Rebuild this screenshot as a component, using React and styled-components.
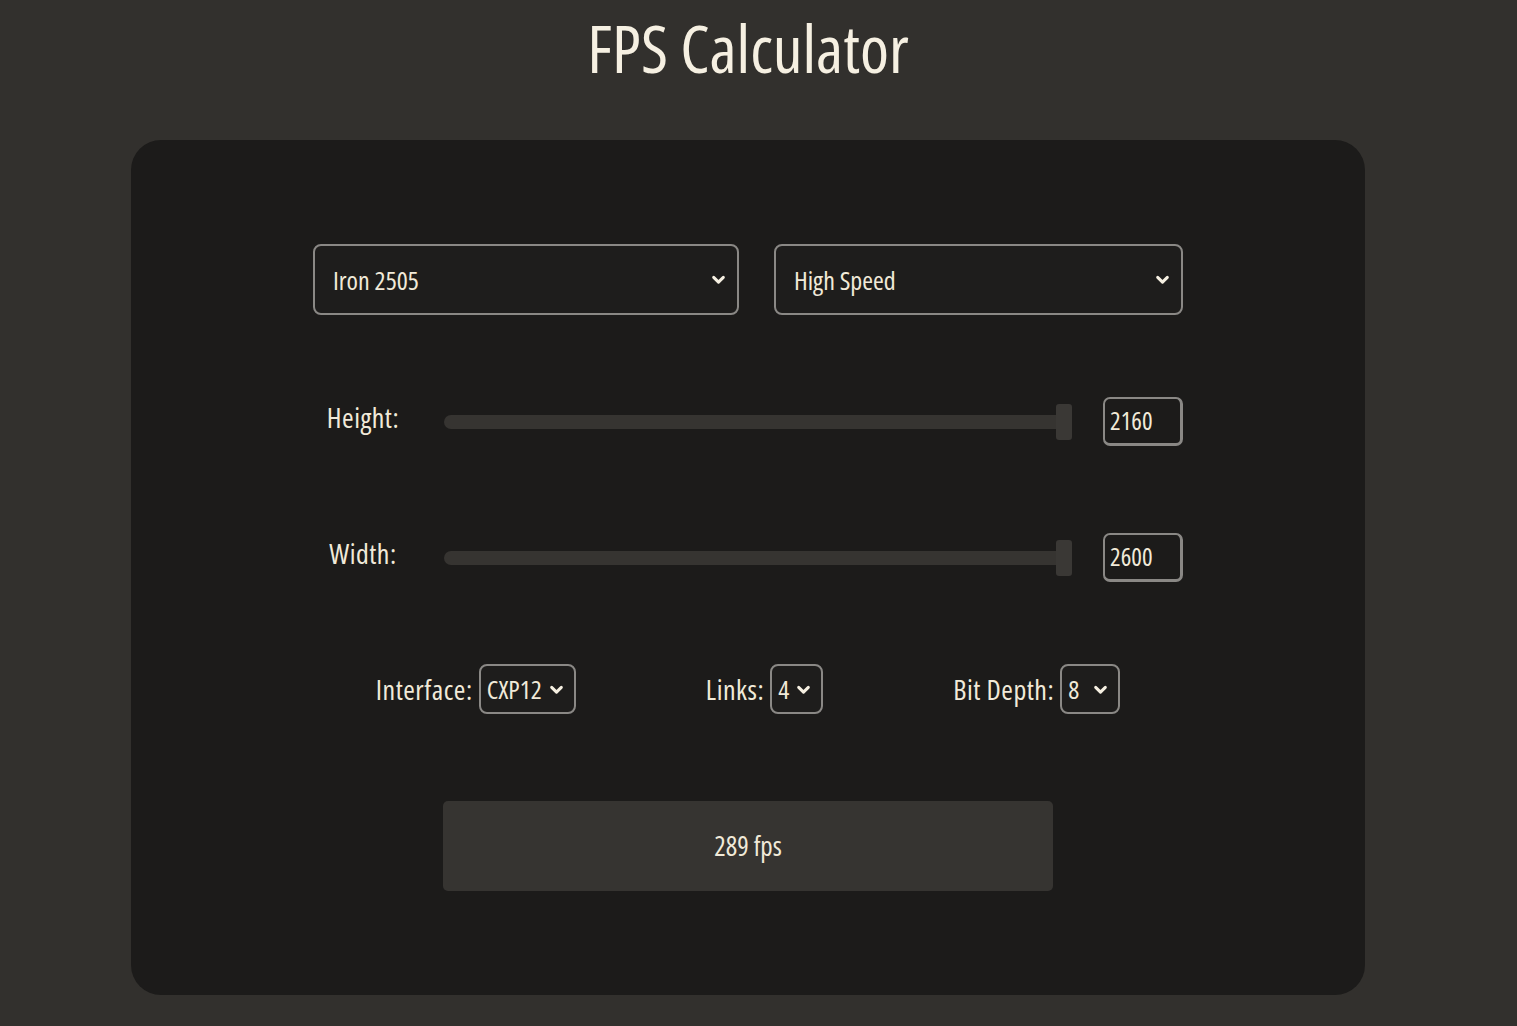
import React from 'react';
import styled, { createGlobalStyle } from 'styled-components';

const GlobalStyle = createGlobalStyle`
    body {
        margin: 0;
        background: #32302d;
        font-family: "Open Sans", "Roboto", sans-serif;
        font-stretch: 75%;
        font-weight: 500;
        color: #f1ead9;
    }
`;

const Page = styled.main`
    min-height: 1026px;
    padding: 9px 152px 0 131px;
    box-sizing: border-box;
`;

const Title = styled.h1`
    margin: 0 0 45px;
    height: 86px;
    font-size: 66px;
    font-weight: 500;
    line-height: 76px;
    text-align: center;
    color: #f6f0e2;
`;

const Card = styled.section`
    background: #1c1b1a;
    border-radius: 30px;
    padding: 104px 0;
    display: flex;
    flex-direction: column;
    align-items: center;
`;

const SelectRow = styled.div`
    width: 870px;
    display: grid;
    grid-template-columns: 426px 409px;
    gap: 35px;
`;

const SelectBox = styled.div`
    width: ${p => p.$w ? `${p.$w}px` : 'auto'};
    height: ${p => p.$small ? 50 : 71}px;
    box-sizing: border-box;
    border: 2px solid #8a8885;
    border-radius: 8px;
    background: #1e1d1c;
    display: flex;
    align-items: center;
    justify-content: space-between;
    gap: ${p => p.$small ? 7 : 10}px;
    padding: ${p => p.$small ? '0 10px 0 6px' : '0 11px 0 18px'};
    font-size: 26px;
    letter-spacing: 0;
    color: #f1ead9;
`;

const Chevron = ({ size = 15 }) => (
    <svg width={size} height={size} viewBox="0 0 14 14" fill="none">
        <path d="M2.5 5l4.5 4.5L11.5 5" stroke="#f6f0e2" strokeWidth="2.8" strokeLinecap="round" strokeLinejoin="round" />
    </svg>
);

const SliderRow = styled.div`
    width: 870px;
    display: grid;
    grid-template-columns: 100px 628px 80px;
    column-gap: 31px;
    align-items: center;
    margin-top: ${p => p.$gap}px;
`;

const Label = styled.span`
    font-size: 28px;
    letter-spacing: 0.5px;
    text-align: center;
    white-space: nowrap;
    margin-top: -9px;
`;

const Track = styled.div`
    height: 14px;
    border-radius: 7px;
    background: #363431;
    display: flex;
    justify-content: flex-end;
    align-items: center;
`;

const Thumb = styled.div`
    width: 16px;
    height: 36px;
    border-radius: 3px;
    background: #3a3835;
`;

const NumberBox = styled.div`
    height: 49px;
    box-sizing: border-box;
    border: 2px solid #8a8885;
    border-right-width: 3px;
    border-bottom-width: 3px;
    border-radius: 7px;
    display: flex;
    align-items: center;
    padding: 0 0 2px 5px;
    font-size: 25px;
`;

const OptionsRow = styled.div`
    display: flex;
    gap: 130px;
    margin-top: 82px;
`;

const Option = styled.div`
    display: flex;
    align-items: center;
    gap: 6px;
    font-size: 28px;
    letter-spacing: 0.5px;
`;

const Result = styled.div`
    width: 610px;
    height: 90px;
    margin-top: 87px;
    padding-bottom: 2px;
    box-sizing: border-box;
    background: #363431;
    border-radius: 5px;
    display: flex;
    align-items: center;
    justify-content: center;
    font-size: 27px;
`;

const Slider = ({ label, value, gap }) => (
    <SliderRow $gap={gap}>
        <Label>{label}</Label>
        <Track><Thumb /></Track>
        <NumberBox>{value}</NumberBox>
    </SliderRow>
);

const App = () => {
    return (
        <Page>
            <GlobalStyle />
            <Title>FPS Calculator</Title>
            <Card>
                <SelectRow>
                    <SelectBox>Iron 2505<Chevron /></SelectBox>
                    <SelectBox>High Speed<Chevron /></SelectBox>
                </SelectRow>
                <Slider label="Height:" value="2160" gap={82} />
                <Slider label="Width:" value="2600" gap={87} />
                <OptionsRow>
                    <Option>Interface:<SelectBox $small>CXP12<Chevron /></SelectBox></Option>
                    <Option>Links:<SelectBox $small>4<Chevron /></SelectBox></Option>
                    <Option>Bit Depth:<SelectBox $small $w={60}>8<Chevron /></SelectBox></Option>
                </OptionsRow>
                <Result>289 fps</Result>
            </Card>
        </Page>
    );
};

export default App;
